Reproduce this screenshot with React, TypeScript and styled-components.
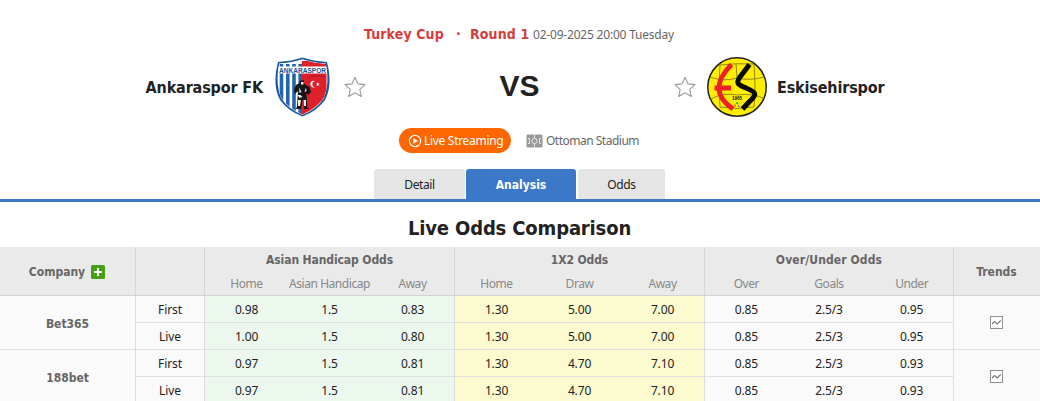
import React from "react";
import styled, { createGlobalStyle, css } from "styled-components";

const GlobalStyle = createGlobalStyle`
  * { box-sizing: border-box; }
  body {
    margin: 0;
    background: #fff;
    color: #222;
    font-family: "Noto Sans", "Open Sans", sans-serif;
    font-size: 12px;
    overflow: hidden;
  }
`;

const boldFace = css`
  font-family: "DejaVu Sans Condensed", "DejaVu Sans", sans-serif;
  font-stretch: condensed;
  font-weight: 700;
`;

const Page = styled.main`
  width: 1040px;
  height: 401px;
  overflow: hidden;
`;

const MatchInfo = styled.header`
  height: 57px;
  padding: 24px 0 0 364px;
  display: flex;
  align-items: baseline;
  white-space: pre;
  line-height: 20px;
`;

const League = styled.span<{ $width: number }>`
  ${boldFace}
  width: ${(p) => p.$width}px;
  font-size: 14px;
  letter-spacing: 0.12px;
  color: #d63c3c;
`;

const Kickoff = styled.span`
  color: #666;
  letter-spacing: -0.2px;
`;

const Teams = styled.section`
  height: 60px;
  display: grid;
  grid-template-columns: 263px 112px 290px 112px 263px;
  align-items: center;
`;

const TeamName = styled.h2<{ $side: "home" | "away" }>`
  ${boldFace}
  margin: 0;
  font-size: 16px;
  line-height: 20px;
  letter-spacing: -0.15px;
  padding-top: 2px;
  white-space: nowrap;
  text-align: ${(p) => (p.$side === "home" ? "right" : "left")};
`;

const Emblems = styled.div<{ $side: "home" | "away" }>`
  display: flex;
  align-items: center;
  gap: ${(p) => (p.$side === "home" ? 14 : 11)}px;
  padding-left: ${(p) => (p.$side === "home" ? 12 : 9)}px;
  svg { flex: none; display: block; overflow: visible; }
`;

const Versus = styled.div`
  padding: 0 1px 2px 0;
  font: 700 30px/58px "Liberation Sans", Arial, sans-serif;
  text-align: center;
`;

const Extras = styled.section`
  height: 52px;
  padding: 11px 0 0 399px;
  display: flex;
  align-items: flex-start;
  gap: 15px;
`;

const StreamButton = styled.button`
  width: 112px;
  height: 25px;
  padding: 0 0 0 9px;
  display: flex;
  align-items: center;
  gap: 2px;
  border: 0;
  border-radius: 13px;
  background: #ff6600;
  color: #fff;
  font: 12px/25px "Noto Sans", sans-serif;
  letter-spacing: -0.3px;
  white-space: nowrap;
`;

const Venue = styled.div`
  display: flex;
  align-items: center;
  gap: 3px;
  line-height: 25px;
  color: #666;
  white-space: nowrap;
  letter-spacing: -0.5px;
`;

const Tabs = styled.nav`
  height: 33px;
  padding-left: 374px;
  display: flex;
  border-bottom: 3px solid #3c78c8;
`;

const Tab = styled.a<{ $width: number; $gap?: number; $active?: boolean }>`
  width: ${(p) => p.$width}px;
  margin-right: ${(p) => p.$gap ?? 0}px;
  border-radius: 3px 3px 0 0;
  background: ${(p) => (p.$active ? "#3c78c8" : "#e5e5e5")};
  color: ${(p) => (p.$active ? "#fff" : "#222")};
  line-height: 31px;
  letter-spacing: ${(p) => (p.$active ? 0 : -0.4)}px;
  text-align: center;
  ${(p) => p.$active && boldFace}
  ${(p) => p.$active && "padding-top: 1px;"}
`;

const Title = styled.h1`
  ${boldFace}
  margin: 0;
  height: 45px;
  padding-right: 1px;
  font-size: 20px;
  line-height: 52px;
  letter-spacing: -0.15px;
  text-align: center;
`;

const columns = css`
  display: grid;
  grid-template-columns: 136px 69px 250px 250px 249px 86px;
`;

const TableHead = styled.div`
  ${columns}
  height: 49px;
  background: #eaeaea;
  border-bottom: 1px solid #d3d3d3;
  color: #666;
`;

const HeadCell = styled.div<{ $last?: boolean }>`
  ${boldFace}
  display: flex;
  align-items: center;
  justify-content: center;
  gap: 6px;
  padding: 1px 1px 0 0;
  border-right: ${(p) => (p.$last ? 0 : 1)}px solid #d6d6d6;
`;

const HeadGroup = styled.div`
  border-right: 1px solid #d6d6d6;
`;

const GroupTitle = styled.div<{ $spacing: number }>`
  ${boldFace}
  height: 24px;
  line-height: 26px;
  letter-spacing: ${(p) => p.$spacing}px;
  text-align: center;
`;

const Triple = styled.div<{ $muted?: boolean }>`
  display: grid;
  grid-template-columns: repeat(3, 1fr);
  height: ${(p) => (p.$muted ? 24 : 26)}px;
  line-height: ${(p) => (p.$muted ? 26 : 28)}px;
  text-align: center;
  letter-spacing: ${(p) => (p.$muted ? -0.45 : -0.15)}px;
  white-space: nowrap;
  color: ${(p) => (p.$muted ? "#888" : "#222")};
`;

const CompanyRow = styled.div`
  ${columns}
  grid-template-rows: 54px;
  background: #fafafa;
`;

const CompanyName = styled.div`
  ${boldFace}
  display: flex;
  align-items: center;
  justify-content: center;
  padding-top: 3px;
  border-right: 1px solid #dcdcdc;
  border-bottom: 1px solid #e0e0e3;
  color: #666;
`;

const Stack = styled.div<{ $tint?: string }>`
  border-right: 1px solid #dddde0;
  background: ${(p) => p.$tint ?? "#fafafa"};
`;

const Line = styled.div`
  height: 27px;
  border-bottom: 1px solid #e0e0e3;
  line-height: 28px;
  text-align: center;
  letter-spacing: -0.1px;
`;

const TrendCell = styled.div`
  display: flex;
  align-items: center;
  justify-content: center;
  padding-right: 1px;
  border-bottom: 1px solid #e0e0e3;
`;

const HomeCrest = () => (
  <svg width="55" height="60" viewBox="0 0 55 60">
    <defs>
      <clipPath id="shield">
        <path d="M4 7Q17 6 27.500 2.500Q38 6 51 7Q55 29 48 42Q40 52 27.500 57.500Q15 52 7 42Q0 29 4 7Z" />
      </clipPath>
    </defs>
    <path d="M3 5Q17 4 27.500 .5Q38 4 52 5Q58 28 50 43Q42 54 27.500 59.500Q13 54 5 43Q-3 28 3 5Z" fill="#1d57a0" />
    <path d="M4.200 6.500Q17 5.800 27.500 2.300Q38 5.800 50.800 6.500Q55.200 28 48.300 42Q41 52.500 27.500 57.800Q14 52.500 6.700 42Q-.2 28 4.200 6.500Z" fill="#fff" />
    <g clipPath="url(#shield)">
      <path fill="#fff" d="M4 6H51V60H4z" />
      <path d="M6.500 7V60M12.800 7V60M19 7V60M25.200 7V60" stroke="#2463ae" strokeWidth="3.600" />
      <path fill="#de2028" d="M27 4H51.500V60H27z" />
      <path fill="#fff" d="M3 9.500H52V16.500H3z" />
    </g>
    <text x="27.500" y="15.600" textAnchor="middle" textLength="47" lengthAdjust="spacingAndGlyphs" fontFamily="Liberation Sans" fontWeight="700" fontSize="7.400" fill="#174d95">ANKARASPOR</text>
    <path d="M31 22Q36 18 50 19.500" stroke="#7c2025" strokeWidth=".8" strokeDasharray="2 .6" fill="none" />
    <path d="M40.200 24.300A3.300 3.300 0 1 0 40.200 30A2.700 2.700 0 1 1 40.200 24.300Z" fill="#fff" />
    <path d="M42.500 25.300l.7 1.200 1.400-.1-.9 1.100.5 1.300-1.300-.6-1.100.8.100-1.400-1.100-.8 1.400-.2z" fill="#fff" />
    <path d="M24.500 24l4-1 1 4 5 3 1.500 5-3 3-2-2 1 5v9l2 2h-5l-1-10-2 10h-5l1-3 1-15-3 3-1-4 2-5 3.500-2z" fill="#15171b" />
    <path d="M26 25h2.500v2.500h-2.500zM24 30.500l2.500 4.500-2 1zM31 30.500l-1.500 4.500 2-1zM22.500 38h3l2 2-3 1zM23 43h3l-1 6h-2zM28.500 43h2.500v6h-2z" fill="#f4eee9" />
  </svg>
);

const AwayCrest = () => (
  <svg width="60" height="60" viewBox="0 0 60 60">
    <circle cx="30" cy="30" r="29.200" fill="#ffed00" stroke="#222" strokeWidth="1.500" />
    <g fill="none" stroke="#766f1b" strokeWidth=".8">
      <path d="M13 8Q30 6 47 7M13 8Q11 30 13 50Q30 53 47 50Q49 30 47 7M3 20Q17 25 30 21Q44 24 57 20M4 42Q16 35 30 38Q45 36 56 41M29 7L30 21" />
    </g>
    <path d="M24.500 7.500C8 24 7 39 26 52M7.500 31H24" fill="none" stroke="#ed2028" strokeWidth="4.800" />
    <path d="M42.500 7.500L33 20C28 27 32 28 39 31C52 36 48 39 43 44L35.500 52" fill="none" stroke="#080808" strokeWidth="5" />
    <text x="30" y="42.500" textAnchor="middle" textLength="10" lengthAdjust="spacingAndGlyphs" fontFamily="Liberation Sans" fontWeight="700" fontSize="4.800" fill="#111">1965</text>
    <path d="M28.500 47l1.500-2.500 1.500 2.500z" fill="#35a36a" />
    <path d="M27 49l1.500-2v3z" fill="#d22" />
    <path d="M31 47l2 3h-1.500z" fill="#36759f" />
  </svg>
);

const Star = () => (
  <svg width="22" height="22" viewBox="0 0 22 22">
    <path d="M11 1.300L14 7.900L21 8.600L15.800 13.300L17.300 20.400L11 16.800L4.700 20.400L6.200 13.300L1 8.600L8 7.900Z" fill="#fff" stroke="#999" strokeWidth="1.100" strokeLinejoin="round" />
  </svg>
);

const PlayIcon = () => (
  <svg width="14" height="14" viewBox="0 0 14 14">
    <circle cx="7" cy="7" r="5.600" fill="none" stroke="#fff" strokeWidth="1.200" />
    <path d="M5.300 4.200L10 7L5.300 9.800Z" fill="#fff" />
  </svg>
);

const PitchIcon = () => (
  <svg width="17" height="14" viewBox="0 0 17 14">
    <rect x=".5" y=".5" width="16" height="13" rx="1.200" fill="#999" />
    <g fill="none" stroke="#eee" strokeWidth=".9">
      <path d="M8.500 .5V4.300M8.500 9.700V13.500M2 4.500H3.500V9.500H2M15 4.500H13.500V9.500H15" />
      <circle cx="8.500" cy="7" r="2.600" />
    </g>
  </svg>
);

const PlusIcon = () => (
  <svg width="14" height="14" viewBox="0 0 14 14">
    <rect width="14" height="14" rx="1.500" fill="#459e14" />
    <path d="M7 3V11M3 7H11" stroke="#fff" strokeWidth="2" />
  </svg>
);

const TrendIcon = () => (
  <svg width="13" height="13" viewBox="0 0 13 13">
    <rect x=".5" y=".5" width="12" height="12" fill="#fff" stroke="#8f8f8f" />
    <path d="M2 8L4.500 5.500L7 8L10.800 4.500" fill="none" stroke="#777" strokeWidth="1.100" />
  </svg>
);

const groups = [
  { title: "Asian Handicap Odds", spacing: -0.1, labels: ["Home", "Asian Handicap", "Away"], tint: "#ecf8ed" },
  { title: "1X2 Odds", spacing: -0.1, labels: ["Home", "Draw", "Away"], tint: "#fcfacf" },
  { title: "Over/Under Odds", spacing: 0.12, labels: ["Over", "Goals", "Under"], tint: "#fafafa" },
];

const companies = [
  {
    name: "Bet365",
    odds: [
      [["0.98", "1.5", "0.83"], ["1.00", "1.5", "0.80"]],
      [["1.30", "5.00", "7.00"], ["1.30", "5.00", "7.00"]],
      [["0.85", "2.5/3", "0.95"], ["0.85", "2.5/3", "0.95"]],
    ],
  },
  {
    name: "188bet",
    odds: [
      [["0.97", "1.5", "0.81"], ["0.97", "1.5", "0.81"]],
      [["1.30", "4.70", "7.10"], ["1.30", "4.70", "7.10"]],
      [["0.85", "2.5/3", "0.93"], ["0.85", "2.5/3", "0.93"]],
    ],
  },
];

export default function App() {
  return (
    <Page>
      <GlobalStyle />
      <MatchInfo>
        <League $width={92}>Turkey Cup</League>
        <League $width={14}>·</League>
        <League $width={63}>Round 1</League>
        <Kickoff>02-09-2025 20:00 Tuesday</Kickoff>
      </MatchInfo>
      <Teams>
        <TeamName $side="home">Ankaraspor FK</TeamName>
        <Emblems $side="home"><HomeCrest /><Star /></Emblems>
        <Versus>VS</Versus>
        <Emblems $side="away"><Star /><AwayCrest /></Emblems>
        <TeamName $side="away">Eskisehirspor</TeamName>
      </Teams>
      <Extras>
        <StreamButton><PlayIcon />Live Streaming</StreamButton>
        <Venue><PitchIcon />Ottoman Stadium</Venue>
      </Extras>
      <Tabs>
        <Tab $width={91} $gap={1}>Detail</Tab>
        <Tab $width={110} $gap={2} $active>Analysis</Tab>
        <Tab $width={87}>Odds</Tab>
      </Tabs>
      <Title>Live Odds Comparison</Title>
      <TableHead>
        <HeadCell>Company<PlusIcon /></HeadCell>
        <HeadCell />
        {groups.map((g) => (
          <HeadGroup key={g.title}>
            <GroupTitle $spacing={g.spacing}>{g.title}</GroupTitle>
            <Triple $muted>{g.labels.map((l) => <span key={l}>{l}</span>)}</Triple>
          </HeadGroup>
        ))}
        <HeadCell $last>Trends</HeadCell>
      </TableHead>
      {companies.map((c) => (
        <CompanyRow key={c.name}>
          <CompanyName>{c.name}</CompanyName>
          <Stack>
            <Line>First</Line>
            <Line>Live</Line>
          </Stack>
          {c.odds.map((lines, i) => (
            <Stack key={i} $tint={groups[i].tint}>
              {lines.map((values, j) => (
                <Line key={j}>
                  <Triple>{values.map((v, k) => <span key={k}>{v}</span>)}</Triple>
                </Line>
              ))}
            </Stack>
          ))}
          <TrendCell><TrendIcon /></TrendCell>
        </CompanyRow>
      ))}
    </Page>
  );
}
